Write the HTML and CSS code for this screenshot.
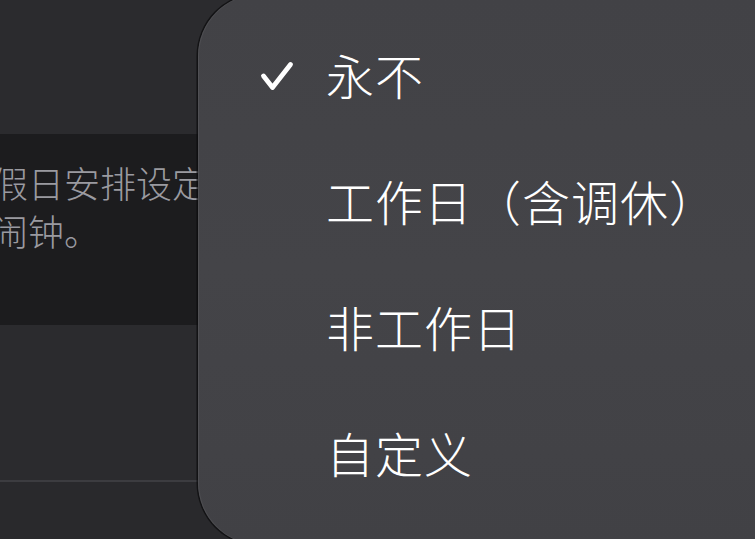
FILE: index.html
```html
<!DOCTYPE html>
<html lang="zh-CN">
<head>
  <meta charset="UTF-8">
  <meta name="viewport" content="width=device-width, initial-scale=1.0">
  <title>重复</title>
  <link rel="stylesheet" href="styles.css">
</head>
<body>
  <!-- Settings page behind the menu -->
  <div class="page">
    <div class="page-top"></div>
    <div class="note">
      <p>假日安排设定<br>闹钟。</p>
    </div>
    <div class="page-row"></div>
    <div class="divider"></div>
    <div class="page-rest"></div>
  </div>

  <!-- Popup menu -->
  <div class="menu">
    <div class="menu-item">
      <span class="check">
        <svg width="34" height="32" viewBox="0 0 34 32">
          <path d="M3.5 15 L12.5 26.5 L30.5 3.5" fill="none" stroke="#fff" stroke-width="4.8" stroke-linecap="round" stroke-linejoin="round"/>
        </svg>
      </span>
      <span class="label">永不</span>
    </div>
    <div class="menu-item">
      <span class="check"></span>
      <span class="label">工作日（含调休）</span>
    </div>
    <div class="menu-item">
      <span class="check"></span>
      <span class="label">非工作日</span>
    </div>
    <div class="menu-item">
      <span class="check"></span>
      <span class="label">自定义</span>
    </div>
  </div>
</body>
</html>
```

FILE: styles.css
```css
/* General */
body {
  margin: 0;
  padding: 0;
  width: 755px;
  height: 539px;
  overflow: hidden;
  position: relative;
  background: #2a2a2d;
  font-family: "Noto Sans CJK SC", "Noto Sans", sans-serif;
}

/* Page behind */
.page {
  display: flex;
  flex-direction: column;
}

.page-top {
  height: 134px;
  background: #2b2b2e;
}

.note {
  height: 191px;
  background: #1c1c1e;
  box-sizing: border-box;
  padding-top: 24px;
}

.note p {
  margin: 0 0 0 -8px;
  font-size: 36px;
  font-weight: 300;
  line-height: 48px;
  color: #9a9aa0;
  white-space: nowrap;
}

.page-row {
  height: 155px;
  background: #2b2b2e;
}

.divider {
  height: 2px;
  background: #3c3c40;
}

.page-rest {
  height: 80px;
  background: #29292c;
}

/* Menu */
.menu {
  position: absolute;
  top: -6px;
  left: 198px;
  width: 640px;
  padding: 17px 0 30px;
  background: linear-gradient(180deg, #424246, #444448 50%, #414145);
  border-radius: 62px;
  box-shadow: 0 0 0 1.5px rgba(10, 10, 12, 0.7), inset 1px 0 1px rgba(255, 255, 255, 0.08);
}

.menu-item {
  height: 126px;
  display: flex;
  align-items: center;
}

.check {
  width: 130px;
  display: flex;
  justify-content: flex-end;
}

.check svg {
  margin-right: 34px;
  margin-top: 5px;
}

.label {
  margin-left: -2px;
  font-size: 48px;
  font-weight: 300;
  letter-spacing: 1px;
  color: #fff;
  line-height: 1;
}
```
